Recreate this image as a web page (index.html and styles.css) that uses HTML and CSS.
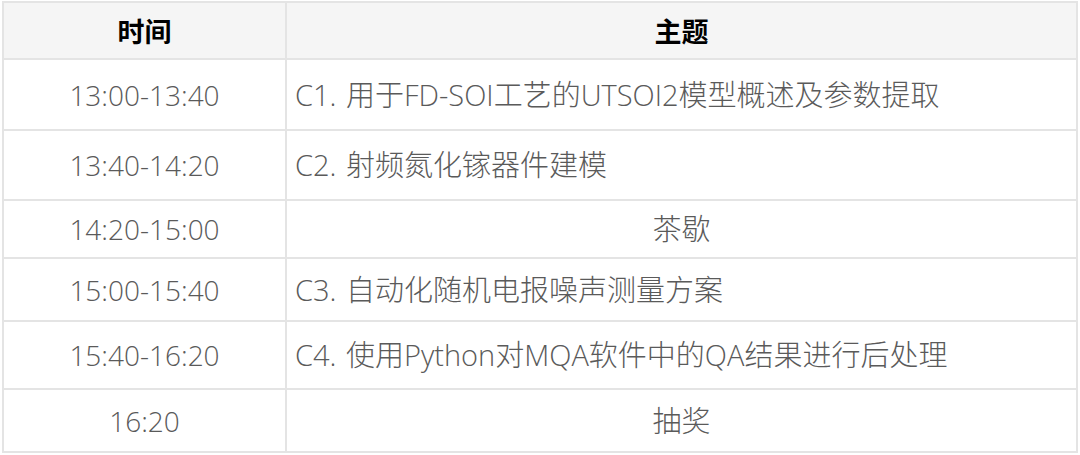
FILE: index.html
```html
<!DOCTYPE html>
<html lang="zh-CN">
<head>
<meta charset="utf-8">
<title>日程</title>
<link rel="stylesheet" href="styles.css">
</head>
<body>
<table class="schedule">
  <thead>
    <tr class="head-row"><th class="col-time">时间</th><th class="col-topic">主题</th></tr>
  </thead>
  <tbody>
    <tr class="r1"><td class="time">13:00-13:40</td><td class="topic">C1. 用于FD-SOI工艺的UTSOI2模型概述及参数提取</td></tr>
    <tr class="r2"><td class="time">13:40-14:20</td><td class="topic">C2. 射频氮化镓器件建模</td></tr>
    <tr class="r3"><td class="time">14:20-15:00</td><td class="topic center">茶歇</td></tr>
    <tr class="r4"><td class="time">15:00-15:40</td><td class="topic">C3. 自动化随机电报噪声测量方案</td></tr>
    <tr class="r5"><td class="time">15:40-16:20</td><td class="topic">C4. 使用Python对MQA软件中的QA结果进行后处理</td></tr>
    <tr class="r6"><td class="time">16:20</td><td class="topic center">抽奖</td></tr>
  </tbody>
</table>
</body>
</html>
```
FILE: styles.css
```css
html, body {
  margin: 0;
  padding: 0;
  background: #ffffff;
}
body {
  padding: 1px 2px 0 2px;
  font-family: "Noto Sans CJK SC", "Noto Sans", sans-serif;
}
.schedule {
  border-collapse: collapse;
  width: 1076px;
  table-layout: fixed;
}
.schedule th, .schedule td {
  border: 2px solid #e4e4e4;
  padding: 0;
  line-height: 30px;
}
.schedule th {
  background: #f5f5f5;
  color: #000000;
  font-size: 27px;
  font-weight: 700;
  text-align: center;
  height: 55px;
}
.col-time { width: 281px; }
.schedule td {
  font-family: "Open Sans", "Noto Sans CJK SC", sans-serif;
  font-size: 28px;
  color: #5a5a5a;
  font-weight: 300;
}
.schedule .time { text-align: center; }
.schedule .topic {
  text-align: left;
  padding-left: 8px;
  font-size: 29px;
  word-spacing: 2px;
}
.schedule .topic.center { text-align: center; padding-left: 0; }
.r1 td { height: 69px; }
.r2 td { height: 68px; }
.r3 td { height: 56px; }
.r4 td { height: 61px; }
.r5 td { height: 66px; }
.r6 td { height: 61px; }
```
